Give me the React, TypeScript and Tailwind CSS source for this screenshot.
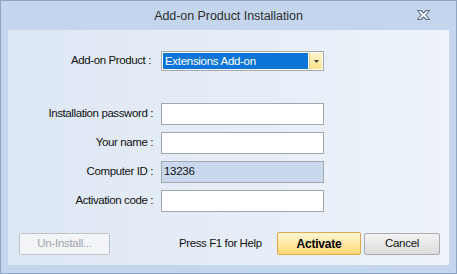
import React from "react";

const font = { fontFamily: '"Liberation Sans", Arial, sans-serif' };

interface FieldProps {
  label: string;
  value?: string;
  readOnly?: boolean;
}

const Field: React.FC<FieldProps> = ({ label, value, readOnly }) => {
  return (
    <div className="flex items-center h-[22px]">
      <div className="w-[145px] text-right text-[11.5px] tracking-[-0.4px] text-[#111]">{label}</div>
      <div
        className={
          readOnly
            ? "ml-[8px] w-[163px] h-[22px] border border-[#a3a8ae] bg-[#c9d8ec] text-[11.5px] tracking-[-0.3px] text-[#111] px-[2px] pt-[2px] leading-[14px]"
            : "ml-[8px] w-[163px] h-[22px] border border-[#a3a8ae] bg-white"
        }
      >
        {value}
      </div>
    </div>
  );
};

export default function App() {
  return (
    <div style={font} className="w-[457px] h-[274px] border border-[#8ea5c3] bg-[#c4d6ed] flex flex-col select-none">
      {/* title bar */}
      <div className="relative h-[29px] flex items-center justify-center">
        <span className="text-[12.5px] tracking-[-0.05px] text-[#2e2e2e] mt-[2px]">Add-on Product Installation</span>
        <svg className="absolute left-[415px] top-[8px]" width="15" height="12" viewBox="0 0 15 12">
          <path
            d="M1.5 1.5 L5 1.5 L7.5 4 L10 1.5 L13.5 1.5 L9.7 6 L13.5 10.5 L10 10.5 L7.5 8 L5 10.5 L1.5 10.5 L5.3 6 Z"
            fill="#f7f9fc"
            stroke="#5e708a"
            strokeWidth="1.1"
            strokeLinejoin="round"
          />
        </svg>
      </div>

      {/* client area */}
      <div className="mx-[7px] h-[235px] bg-gradient-to-r from-[#dde7f4] to-[#eef3fa] flex flex-col pt-[21px]">
        <div className="flex items-center h-[20px]">
          <div className="w-[143px] text-right text-[11.5px] tracking-[-0.4px] text-[#111]">Add-on Product :</div>
          <div className="ml-[10px] w-[163px] h-[20px] border border-[#a5a8ac] bg-white flex p-[1px]">
            <div className="flex-1 bg-[#0a74d8] text-white text-[11.5px] tracking-[-0.3px] leading-[16px] pl-[2px]">
              Extensions Add-on
            </div>
            <div className="w-[13px] ml-[1px] bg-gradient-to-b from-[#fdf4cc] to-[#fbe38a] border-l border-[#e4cc7e] flex items-center justify-center">
              <svg width="5" height="3" viewBox="0 0 5 3">
                <path d="M0 0 H5 L2.5 3 Z" fill="#3c3c3c" />
              </svg>
            </div>
          </div>
        </div>

        <div className="flex flex-col gap-[7px] mt-[32px]">
          <Field label="Installation password :" />
          <Field label="Your name :" />
          <Field label="Computer ID :" value="13236" readOnly />
          <Field label="Activation code :" />
        </div>

        <div className="flex items-center mt-[20px] h-[23px]">
          <button className="ml-[11px] w-[91px] h-[22px] mt-[1px] rounded-[2px] border border-[#bfc3c8] bg-[#f2f4f7] text-[11.5px] tracking-[-0.3px] text-[#a3a6aa]">
            Un-Install...
          </button>
          <span className="ml-[69px] w-[98px] text-[11.5px] tracking-[-0.4px] text-[#111]">Press F1 for Help</span>
          <button className="w-[84px] h-[23px] rounded-[2px] border border-[#dcaa4a] bg-gradient-to-b from-[#fff6d2] to-[#ffd874] text-[12px] font-bold tracking-[-0.2px] text-black">
            Activate
          </button>
          <button className="ml-[3px] w-[76px] h-[22px] mt-[1px] rounded-[2px] border border-[#a9acb0] bg-gradient-to-b from-[#f3f3f3] to-[#dcdcdc] text-[11.5px] tracking-[-0.3px] text-[#111]">
            Cancel
          </button>
        </div>
      </div>
    </div>
  );
}
